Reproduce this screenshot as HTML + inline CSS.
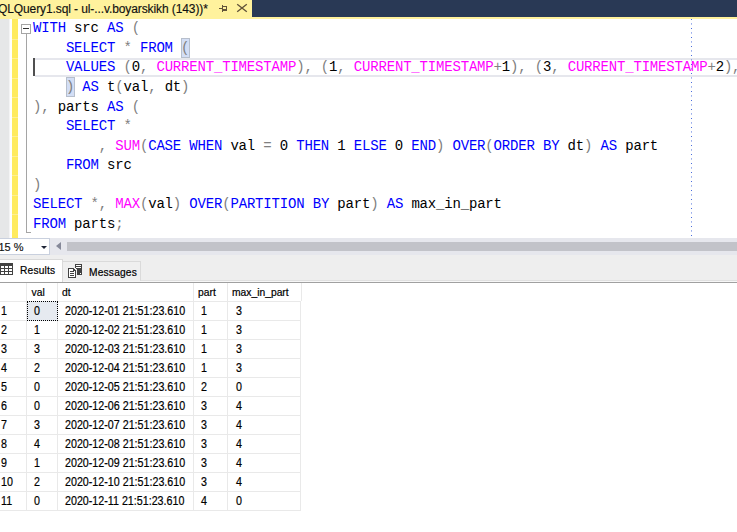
<!DOCTYPE html>
<html><head><meta charset="utf-8">
<style>
*{margin:0;padding:0;box-sizing:border-box}
html,body{width:737px;height:532px;overflow:hidden;background:#fff;position:relative}
body{font-family:"Liberation Sans",sans-serif}
.a{position:absolute}
/* top */
#navy{left:0;top:0;width:737px;height:17px;background:#293955}
#tab{left:0;top:0;width:252px;height:19px;background:#FFF29D}
#strip{left:0;top:17px;width:737px;height:2px;background:#FFF29D}
#title{left:-2px;top:1px;font-size:12px;line-height:16px;color:#111;-webkit-text-stroke:0.15px #111;white-space:nowrap;letter-spacing:-0.1px}
/* editor */
#margin{left:0;top:19px;width:9px;height:219px;background:#E6E7E8}
#margin2{left:9px;top:19px;width:1px;height:219px;background:#F4F4F5}
#chg{left:12px;top:19px;width:6px;height:219px;background:#FFEB5F}
.chl{left:12px;width:6px;height:1px;background:#FFEF94}
#code{left:33px;top:19.4px;font-family:"Liberation Mono",monospace;font-size:14px;letter-spacing:-0.18px;line-height:19.54px;white-space:pre;color:#000}
.k{color:#0000FF}.f{color:#FF00FF}.o{color:#808080}
#curline{left:35px;top:58px;width:702px;height:19px;border-top:2px solid #E6E7ED;border-bottom:2px solid #E6E7ED}
#caret{left:33px;top:58px;width:2px;height:18px;background:#505050}
.bb{background:#D3DEF5;border:1px solid #B7BFCC}
#dots{left:691px;top:19px;width:1px;height:218px;background-image:linear-gradient(#3E63DA 0,#3E63DA 1px,transparent 1px);background-size:1px 4.5px}
#cbox{left:21px;top:24px;width:10px;height:10px;border:1px solid #A5A5A5;background:#fff}
#cbox i{position:absolute;left:1px;top:3px;width:6px;height:1px;background:#333}
#cline{left:26px;top:34px;width:1px;height:199px;background:#A5A5A5}
#cend{left:26px;top:232px;width:5px;height:1px;background:#A5A5A5}
/* bottom bar */
#bar{left:0;top:238px;width:737px;height:17px;background:#E6E7ED}
#zoom{left:-1px;top:238px;width:51px;height:17px;border:1px solid #C9D0DE;background:#fff;font-size:12px;line-height:15px;color:#1e1e1e;padding-left:0}
#zoomtxt{left:-1.5px;top:240px;font-size:11px;line-height:15px;color:#111;-webkit-text-stroke:0.15px #111;white-space:nowrap}
#dd{left:41px;top:246px;width:0;height:0;border-left:3px solid transparent;border-right:3px solid transparent;border-top:3px solid #1E2537}
#larr{left:56px;top:242px;width:0;height:0;border-top:4.5px solid transparent;border-bottom:4.5px solid transparent;border-right:5px solid #868999}
#thumb{left:67px;top:242px;width:670px;height:9px;background:#C2C3C9}
/* results tabs */
#rstrip{left:0;top:255px;width:737px;height:26px;background:#EEEEEE}
#rline{left:0;top:282px;width:737px;height:1px;background:#A0A0A0}
#rline2{left:0;top:280px;width:737px;height:2px;background:linear-gradient(#E0E0E0 50%,#F7F7F7 50%)}
#rtab{left:-1px;top:259px;width:64px;height:23px;background:#fff;border:1px solid #D9D9D9;border-bottom:none}
#mtab{left:62px;top:261px;width:79px;height:20px;background:#EFEFEF;border:1px solid #DADADA;border-bottom:none}
.tt{font-size:10.2px;color:#000;-webkit-text-stroke:0.2px #000;white-space:nowrap;line-height:12px}
/* grid */
.gl{background:#E9E9E9}
.gt{font-size:10.7px;color:#000;-webkit-text-stroke:0.2px #000;white-space:nowrap;line-height:12px}
</style></head><body>
<div class="a" id="navy"></div>
<div class="a" id="tab"></div>
<div class="a" id="strip"></div>
<div class="a" id="title">QLQuery1.sql - ul-...v.boyarskikh (143))*</div>
<svg class="a" style="left:218px;top:4px" width="11" height="9" viewBox="0 0 11 9" shape-rendering="crispEdges"><g fill="#62543A"><rect x="1" y="4" width="3" height="1"/><rect x="4" y="1" width="1" height="7"/><rect x="4" y="2" width="5" height="1"/><rect x="8" y="2" width="1" height="5"/><rect x="4" y="5" width="5" height="2"/></g></svg>
<svg class="a" style="left:236px;top:3px" width="12" height="11" viewBox="0 0 12 11"><path d="M1.2 1.2L10.8 8.8M10.8 1.2L1.2 8.8" stroke="#62543A" stroke-width="1.35" fill="none"/></svg>

<div class="a" id="margin"></div>
<div class="a" id="margin2"></div>
<div class="a" id="chg"></div><div class="a chl" style="top:39px"></div><div class="a chl" style="top:58px"></div><div class="a chl" style="top:78px"></div><div class="a chl" style="top:97px"></div><div class="a chl" style="top:117px"></div><div class="a chl" style="top:136px"></div><div class="a chl" style="top:156px"></div><div class="a chl" style="top:175px"></div><div class="a chl" style="top:195px"></div><div class="a chl" style="top:214px"></div>
<div class="a" id="curline"></div>
<div class="a" id="dots"></div>
<div class="a" id="cline"></div>
<div class="a bb" style="left:181px;top:38px;width:9px;height:20px"></div>
<div class="a bb" style="left:66px;top:77px;width:9px;height:20px"></div>
<div class="a" id="cend"></div>
<div class="a" id="cbox"><i></i></div>
<div class="a" id="code"><span class="k">WITH</span> src <span class="k">AS</span> <span class="o">(</span>
    <span class="k">SELECT</span> <span class="o">*</span> <span class="k">FROM</span> <span class="o">(</span>
    <span class="k">VALUES</span> <span class="o">(</span>0<span class="o">,</span> <span class="f">CURRENT_TIMESTAMP</span><span class="o">),</span> <span class="o">(</span>1<span class="o">,</span> <span class="f">CURRENT_TIMESTAMP</span><span class="o">+</span>1<span class="o">),</span> <span class="o">(</span>3<span class="o">,</span> <span class="f">CURRENT_TIMESTAMP</span><span class="o">+</span>2<span class="o">),</span>
    <span class="o">)</span> <span class="k">AS</span> t<span class="o">(</span>val<span class="o">,</span> dt<span class="o">)</span>
<span class="o">),</span> parts <span class="k">AS</span> <span class="o">(</span>
    <span class="k">SELECT</span> <span class="o">*</span>
        <span class="o">,</span> <span class="f">SUM</span><span class="o">(</span><span class="k">CASE</span> <span class="k">WHEN</span> val <span class="o">=</span> 0 <span class="k">THEN</span> 1 <span class="k">ELSE</span> 0 <span class="k">END</span><span class="o">)</span> <span class="k">OVER</span><span class="o">(</span><span class="k">ORDER</span> <span class="k">BY</span> dt<span class="o">)</span> <span class="k">AS</span> part
    <span class="k">FROM</span> src
<span class="o">)</span>
<span class="k">SELECT</span> <span class="o">*,</span> <span class="f">MAX</span><span class="o">(</span>val<span class="o">)</span> <span class="k">OVER</span><span class="o">(</span><span class="k">PARTITION</span> <span class="k">BY</span> part<span class="o">)</span> <span class="k">AS</span> max_in_part
<span class="k">FROM</span> parts<span class="o">;</span></div>
<div class="a" id="caret"></div>

<div class="a" id="bar"></div>
<div class="a" id="zoom"></div>
<div class="a" id="zoomtxt">15 %</div>
<div class="a" id="dd"></div>
<div class="a" id="larr"></div>
<div class="a" id="thumb"></div>

<div class="a" id="rstrip"></div>
<div class="a" id="rline2"></div>
<div class="a" id="rline"></div>
<div class="a" id="rtab"></div>
<div class="a" id="mtab"></div>
<svg class="a" style="left:0;top:263px" width="13" height="12" viewBox="0 0 13 12"><rect x="0" y="0" width="13" height="12" fill="#424242"/><g fill="#fff"><rect x="1" y="3" width="3" height="2"/><rect x="5" y="3" width="3" height="2"/><rect x="9" y="3" width="3" height="2"/><rect x="1" y="6" width="3" height="2"/><rect x="5" y="6" width="3" height="2"/><rect x="9" y="6" width="3" height="2"/><rect x="1" y="9" width="3" height="2"/><rect x="5" y="9" width="3" height="2"/><rect x="9" y="9" width="3" height="2"/></g></svg>
<div class="a tt" style="left:20px;top:264.8px;letter-spacing:0.2px">Results</div>
<svg class="a" style="left:64px;top:260px" width="24" height="20" viewBox="0 0 24 20" shape-rendering="crispEdges"><rect x="11" y="4" width="7" height="11" fill="#424242"/><rect x="12" y="5" width="5" height="1" fill="#fff"/><rect x="12" y="7" width="5" height="1" fill="#fff"/><rect x="16" y="13" width="1" height="1" fill="#fff"/><path d="M3 7H10L13 10V19H3Z" fill="#EFEFEF"/><path d="M4 8H9L12 11V18H4Z" fill="#424242"/><path d="M5 9H9V11H11V17H5Z" fill="#fff"/><rect x="6" y="11" width="4" height="1" fill="#424242"/><rect x="6" y="13" width="4" height="1" fill="#424242"/><rect x="6" y="15" width="4" height="1" fill="#424242"/></svg>
<div class="a tt" style="left:89px;top:266.8px;letter-spacing:0.2px">Messages</div>

<!--G-->
<div class="a gl" style="left:0;top:301px;width:301px;height:1px"></div>
<div class="a gl" style="left:0;top:320px;width:301px;height:1px"></div>
<div class="a gl" style="left:0;top:339px;width:301px;height:1px"></div>
<div class="a gl" style="left:0;top:358px;width:301px;height:1px"></div>
<div class="a gl" style="left:0;top:377px;width:301px;height:1px"></div>
<div class="a gl" style="left:0;top:396px;width:301px;height:1px"></div>
<div class="a gl" style="left:0;top:415px;width:301px;height:1px"></div>
<div class="a gl" style="left:0;top:434px;width:301px;height:1px"></div>
<div class="a gl" style="left:0;top:453px;width:301px;height:1px"></div>
<div class="a gl" style="left:0;top:472px;width:301px;height:1px"></div>
<div class="a gl" style="left:0;top:491px;width:301px;height:1px"></div>
<div class="a gl" style="left:0;top:510px;width:301px;height:1px"></div>
<div class="a gl" style="left:26px;top:283px;width:1px;height:228px"></div>
<div class="a gl" style="left:57px;top:283px;width:1px;height:228px"></div>
<div class="a gl" style="left:193px;top:283px;width:1px;height:228px"></div>
<div class="a gl" style="left:227px;top:283px;width:1px;height:228px"></div>
<div class="a gl" style="left:301px;top:283px;width:1px;height:18px"></div>
<div class="a gl" style="left:300px;top:301px;width:1px;height:210px"></div>
<div class="a" style="left:27px;top:301px;width:31px;height:20px;background:#E6EAF0;border:1px dotted #000"></div>
<div class="a gt" style="left:31.5px;top:286.83px;font-size:10.3px">val</div>
<div class="a gt" style="left:62px;top:286.83px;font-size:10.3px">dt</div>
<div class="a gt" style="left:198px;top:286.83px;font-size:10.3px">part</div>
<div class="a gt" style="left:232px;top:286.83px;font-size:10.3px">max_in_part</div>
<div class="a gt" style="left:0.9px;top:304.94px;font-size:12.3px;transform:scaleX(0.87);transform-origin:0 0">1</div>
<div class="a gt" style="left:34.2px;top:304.94px;font-size:12.3px;transform:scaleX(0.87);transform-origin:0 0">0</div>
<div class="a gt" style="left:64.5px;top:304.94px;font-size:12.3px;transform:scaleX(0.87);transform-origin:0 0">2020-12-01 21:51:23.610</div>
<div class="a gt" style="left:201px;top:304.94px;font-size:12.3px;transform:scaleX(0.87);transform-origin:0 0">1</div>
<div class="a gt" style="left:235.5px;top:304.94px;font-size:12.3px;transform:scaleX(0.87);transform-origin:0 0">3</div>
<div class="a gt" style="left:0.9px;top:323.94px;font-size:12.3px;transform:scaleX(0.87);transform-origin:0 0">2</div>
<div class="a gt" style="left:34.2px;top:323.94px;font-size:12.3px;transform:scaleX(0.87);transform-origin:0 0">1</div>
<div class="a gt" style="left:64.5px;top:323.94px;font-size:12.3px;transform:scaleX(0.87);transform-origin:0 0">2020-12-02 21:51:23.610</div>
<div class="a gt" style="left:201px;top:323.94px;font-size:12.3px;transform:scaleX(0.87);transform-origin:0 0">1</div>
<div class="a gt" style="left:235.5px;top:323.94px;font-size:12.3px;transform:scaleX(0.87);transform-origin:0 0">3</div>
<div class="a gt" style="left:0.9px;top:342.94px;font-size:12.3px;transform:scaleX(0.87);transform-origin:0 0">3</div>
<div class="a gt" style="left:34.2px;top:342.94px;font-size:12.3px;transform:scaleX(0.87);transform-origin:0 0">3</div>
<div class="a gt" style="left:64.5px;top:342.94px;font-size:12.3px;transform:scaleX(0.87);transform-origin:0 0">2020-12-03 21:51:23.610</div>
<div class="a gt" style="left:201px;top:342.94px;font-size:12.3px;transform:scaleX(0.87);transform-origin:0 0">1</div>
<div class="a gt" style="left:235.5px;top:342.94px;font-size:12.3px;transform:scaleX(0.87);transform-origin:0 0">3</div>
<div class="a gt" style="left:0.9px;top:361.94px;font-size:12.3px;transform:scaleX(0.87);transform-origin:0 0">4</div>
<div class="a gt" style="left:34.2px;top:361.94px;font-size:12.3px;transform:scaleX(0.87);transform-origin:0 0">2</div>
<div class="a gt" style="left:64.5px;top:361.94px;font-size:12.3px;transform:scaleX(0.87);transform-origin:0 0">2020-12-04 21:51:23.610</div>
<div class="a gt" style="left:201px;top:361.94px;font-size:12.3px;transform:scaleX(0.87);transform-origin:0 0">1</div>
<div class="a gt" style="left:235.5px;top:361.94px;font-size:12.3px;transform:scaleX(0.87);transform-origin:0 0">3</div>
<div class="a gt" style="left:0.9px;top:380.94px;font-size:12.3px;transform:scaleX(0.87);transform-origin:0 0">5</div>
<div class="a gt" style="left:34.2px;top:380.94px;font-size:12.3px;transform:scaleX(0.87);transform-origin:0 0">0</div>
<div class="a gt" style="left:64.5px;top:380.94px;font-size:12.3px;transform:scaleX(0.87);transform-origin:0 0">2020-12-05 21:51:23.610</div>
<div class="a gt" style="left:201px;top:380.94px;font-size:12.3px;transform:scaleX(0.87);transform-origin:0 0">2</div>
<div class="a gt" style="left:235.5px;top:380.94px;font-size:12.3px;transform:scaleX(0.87);transform-origin:0 0">0</div>
<div class="a gt" style="left:0.9px;top:399.94px;font-size:12.3px;transform:scaleX(0.87);transform-origin:0 0">6</div>
<div class="a gt" style="left:34.2px;top:399.94px;font-size:12.3px;transform:scaleX(0.87);transform-origin:0 0">0</div>
<div class="a gt" style="left:64.5px;top:399.94px;font-size:12.3px;transform:scaleX(0.87);transform-origin:0 0">2020-12-06 21:51:23.610</div>
<div class="a gt" style="left:201px;top:399.94px;font-size:12.3px;transform:scaleX(0.87);transform-origin:0 0">3</div>
<div class="a gt" style="left:235.5px;top:399.94px;font-size:12.3px;transform:scaleX(0.87);transform-origin:0 0">4</div>
<div class="a gt" style="left:0.9px;top:418.94px;font-size:12.3px;transform:scaleX(0.87);transform-origin:0 0">7</div>
<div class="a gt" style="left:34.2px;top:418.94px;font-size:12.3px;transform:scaleX(0.87);transform-origin:0 0">3</div>
<div class="a gt" style="left:64.5px;top:418.94px;font-size:12.3px;transform:scaleX(0.87);transform-origin:0 0">2020-12-07 21:51:23.610</div>
<div class="a gt" style="left:201px;top:418.94px;font-size:12.3px;transform:scaleX(0.87);transform-origin:0 0">3</div>
<div class="a gt" style="left:235.5px;top:418.94px;font-size:12.3px;transform:scaleX(0.87);transform-origin:0 0">4</div>
<div class="a gt" style="left:0.9px;top:437.94px;font-size:12.3px;transform:scaleX(0.87);transform-origin:0 0">8</div>
<div class="a gt" style="left:34.2px;top:437.94px;font-size:12.3px;transform:scaleX(0.87);transform-origin:0 0">4</div>
<div class="a gt" style="left:64.5px;top:437.94px;font-size:12.3px;transform:scaleX(0.87);transform-origin:0 0">2020-12-08 21:51:23.610</div>
<div class="a gt" style="left:201px;top:437.94px;font-size:12.3px;transform:scaleX(0.87);transform-origin:0 0">3</div>
<div class="a gt" style="left:235.5px;top:437.94px;font-size:12.3px;transform:scaleX(0.87);transform-origin:0 0">4</div>
<div class="a gt" style="left:0.9px;top:456.94px;font-size:12.3px;transform:scaleX(0.87);transform-origin:0 0">9</div>
<div class="a gt" style="left:34.2px;top:456.94px;font-size:12.3px;transform:scaleX(0.87);transform-origin:0 0">1</div>
<div class="a gt" style="left:64.5px;top:456.94px;font-size:12.3px;transform:scaleX(0.87);transform-origin:0 0">2020-12-09 21:51:23.610</div>
<div class="a gt" style="left:201px;top:456.94px;font-size:12.3px;transform:scaleX(0.87);transform-origin:0 0">3</div>
<div class="a gt" style="left:235.5px;top:456.94px;font-size:12.3px;transform:scaleX(0.87);transform-origin:0 0">4</div>
<div class="a gt" style="left:0.9px;top:475.94px;font-size:12.3px;transform:scaleX(0.87);transform-origin:0 0">10</div>
<div class="a gt" style="left:34.2px;top:475.94px;font-size:12.3px;transform:scaleX(0.87);transform-origin:0 0">2</div>
<div class="a gt" style="left:64.5px;top:475.94px;font-size:12.3px;transform:scaleX(0.87);transform-origin:0 0">2020-12-10 21:51:23.610</div>
<div class="a gt" style="left:201px;top:475.94px;font-size:12.3px;transform:scaleX(0.87);transform-origin:0 0">3</div>
<div class="a gt" style="left:235.5px;top:475.94px;font-size:12.3px;transform:scaleX(0.87);transform-origin:0 0">4</div>
<div class="a gt" style="left:0.9px;top:494.94px;font-size:12.3px;transform:scaleX(0.87);transform-origin:0 0">11</div>
<div class="a gt" style="left:34.2px;top:494.94px;font-size:12.3px;transform:scaleX(0.87);transform-origin:0 0">0</div>
<div class="a gt" style="left:64.5px;top:494.94px;font-size:12.3px;transform:scaleX(0.87);transform-origin:0 0">2020-12-11 21:51:23.610</div>
<div class="a gt" style="left:201px;top:494.94px;font-size:12.3px;transform:scaleX(0.87);transform-origin:0 0">4</div>
<div class="a gt" style="left:235.5px;top:494.94px;font-size:12.3px;transform:scaleX(0.87);transform-origin:0 0">0</div>
<!--/G-->
</body></html>
